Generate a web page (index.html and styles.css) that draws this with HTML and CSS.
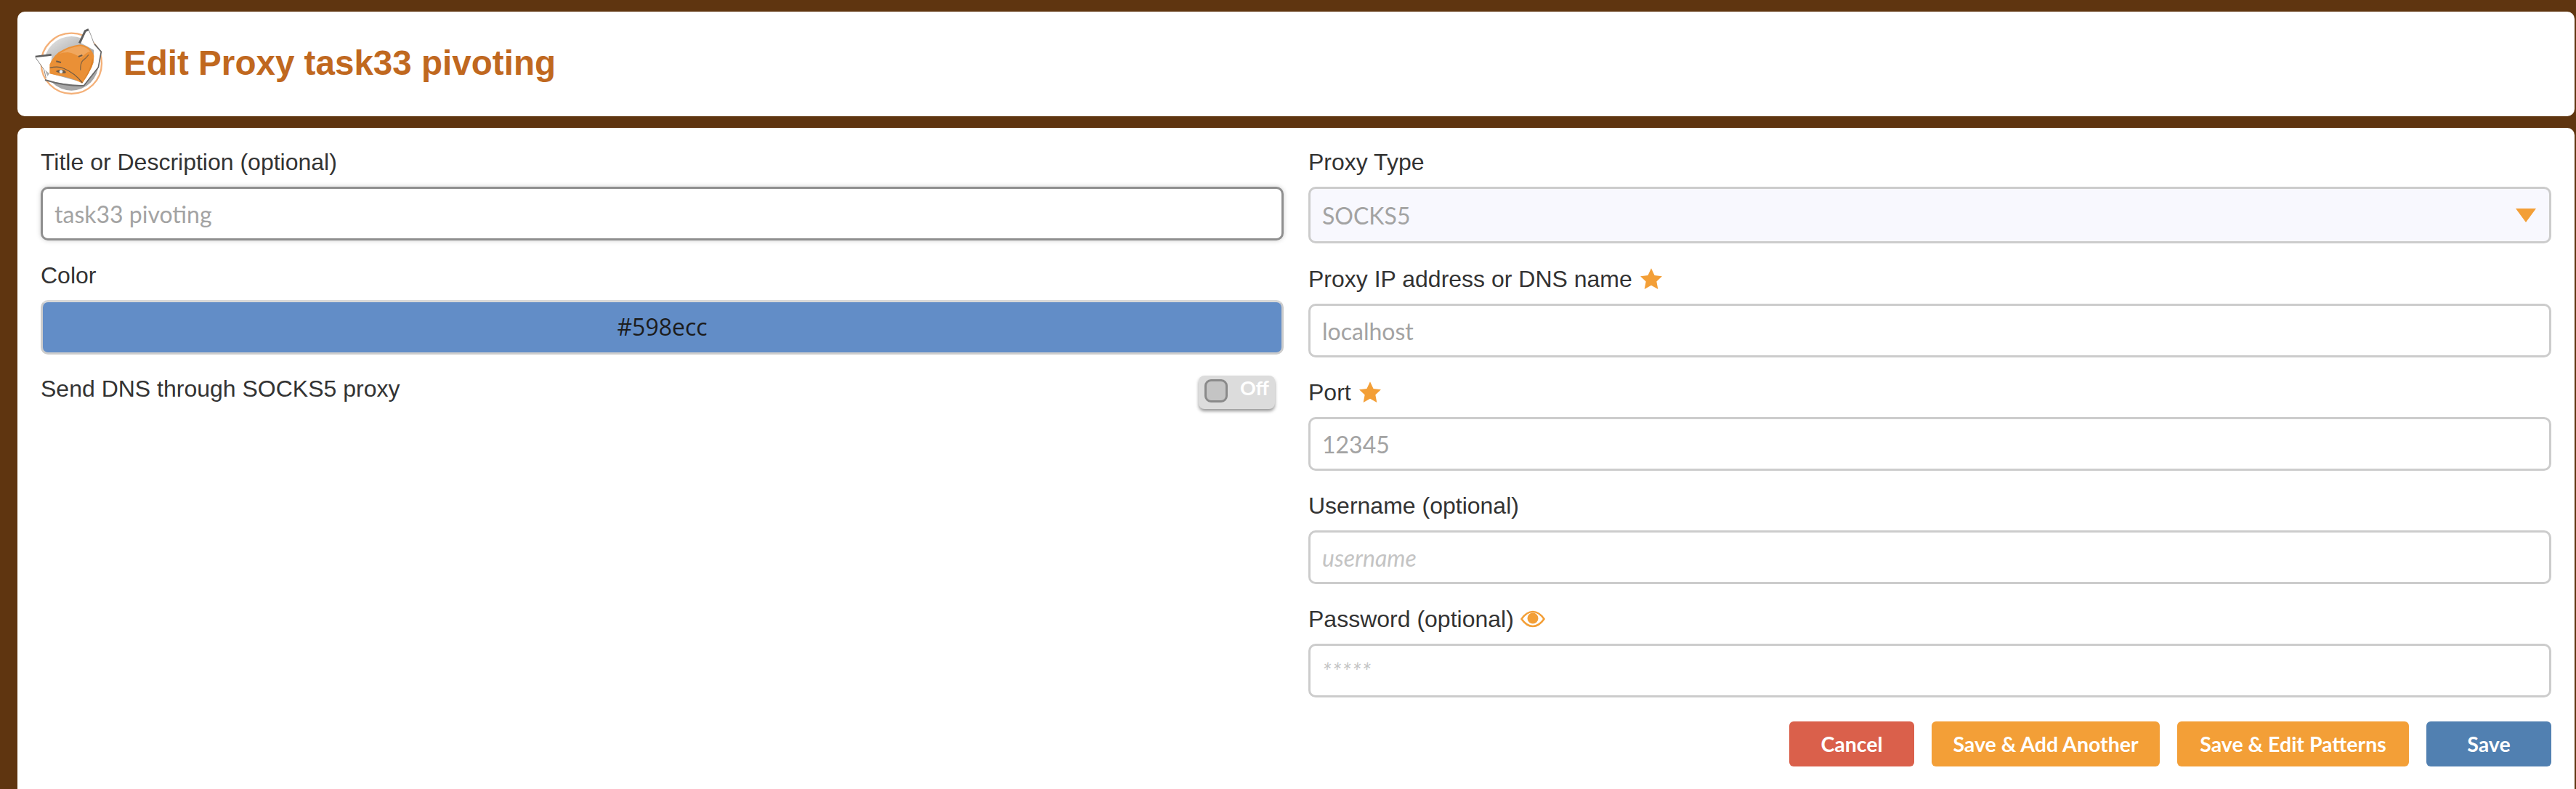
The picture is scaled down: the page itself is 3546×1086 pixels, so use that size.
FILE: index.html
```html
<!DOCTYPE html>
<html>
<head>
	<title>Edit Proxy</title>
	<link rel="stylesheet" href="styles.css">
</head>
<body>
	<!-- page title with the fox logo -->
	<div id="header" class="panel">
		<svg class="logo" viewBox="0 0 330 330">
			<defs>
				<linearGradient id="disc" x1="0.2" y1="0" x2="0.8" y2="1">
					<stop offset="0" stop-color="#e2e2e2"/>
					<stop offset="0.5" stop-color="#a6a6a6"/>
					<stop offset="1" stop-color="#a8a8a8"/>
				</linearGradient>
			</defs>
			<circle cx="175" cy="172" r="125" fill="#fff" stroke="#f4b078" stroke-width="7"/>
			<circle cx="175" cy="172" r="112" fill="url(#disc)"/>
			<!-- ears -->
			<path d="M215 88 L234 36 L246 32 Q258 60 268 90 L274 120 Z" fill="#fff"/>
			<path d="M208 88 Q222 60 232 38 L246 32" fill="none" stroke="#5f5f5f" stroke-width="9"/>
			<path d="M246 32 Q258 60 268 90" fill="none" stroke="#999" stroke-width="3"/>
			<path d="M28 146 L94 140 L86 215 L62 196 Z" fill="#fff"/>
			<path d="M26 144 L92 136" fill="none" stroke="#5f5f5f" stroke-width="8"/>
			<path d="M27 148 L62 198 L70 232" fill="none" stroke="#8a8a8a" stroke-width="3"/>
			<!-- white band under the chin -->
			<path d="M268 90 L296 122 L286 186 L226 262 Q150 262 68 240 L84 212 L218 250 L266 170 Z" fill="#fff"/>
			<path d="M270 92 L298 124 L286 188 L226 264" fill="none" stroke="#666" stroke-width="5"/>
			<path d="M226 264 Q150 266 66 240" fill="none" stroke="#6c6c6c" stroke-width="6"/>
			<!-- face -->
			<path d="M85 176 Q98 146 122 126 Q168 98 212 94 Q254 100 268 140 Q268 176 252 200 Q238 230 220 254 Q170 228 120 222 Q98 218 85 214 Z" fill="#ea9036"/>
			<path d="M125 132 Q170 104 212 100 Q240 106 252 122 Q232 128 214 150 Q190 130 160 126 Q140 126 125 132 Z" fill="#f0a75e"/>
			<path d="M225 240 Q252 200 262 150 Q268 170 252 200 Q240 226 225 240 Z" fill="#dd8228"/>
			<!-- eyes and muzzle lines -->
			<path d="M86 190 Q120 182 142 192 Q190 212 220 252" fill="none" stroke="#6f5a45" stroke-width="4"/>
			<path d="M110 204 Q126 194 146 200 Q156 208 150 212 Q126 216 110 204 Z" fill="#6f5a45"/>
			<circle cx="132" cy="206" r="7" fill="#e8edf0"/>
			<path d="M112 163 L132 168" stroke="#6f5a45" stroke-width="6" fill="none"/>
			<path d="M204 144 L220 138" stroke="#6f5a45" stroke-width="6" fill="none"/>
			<path d="M212 200 Q212 170 222 160 Q236 150 246 136" stroke="#8a6640" stroke-width="4" fill="none"/>
		</svg>
		<h1>Edit Proxy task33 pivoting</h1>
	</div>

	<div id="content" class="panel">
		<!-- left column -->
		<div class="column">
			<div class="field">
				<label>Title or Description (optional)</label>
				<input type="text" class="focused" placeholder="task33 pivoting">
			</div>
			<div class="field">
				<label>Color</label>
				<div class="color_bar">#598ecc</div>
			</div>
			<div class="dns_row">
				<label>Send DNS through SOCKS5 proxy</label>
				<div class="toggle">
					<span class="knob"></span>
					<span class="toggle_text">Off</span>
				</div>
			</div>
		</div>
		<!-- right column -->
		<div class="column">
			<div class="field type_field">
				<label>Proxy Type</label>
				<div class="select">
					<span>SOCKS5</span>
					<span class="arrow"></span>
				</div>
			</div>
			<div class="field">
				<label>Proxy IP address or DNS name
					<svg class="star" viewBox="0 0 24 24"><path d="M12 1 L15.4 8.2 L23.2 9.2 L17.5 14.6 L19 22.5 L12 18.6 L5 22.5 L6.5 14.6 L0.8 9.2 L8.6 8.2 Z"/></svg>
				</label>
				<input type="text" placeholder="localhost">
			</div>
			<div class="field">
				<label>Port
					<svg class="star" viewBox="0 0 24 24"><path d="M12 1 L15.4 8.2 L23.2 9.2 L17.5 14.6 L19 22.5 L12 18.6 L5 22.5 L6.5 14.6 L0.8 9.2 L8.6 8.2 Z"/></svg>
				</label>
				<input type="text" placeholder="12345">
			</div>
			<div class="field">
				<label>Username (optional)</label>
				<input type="text" class="faint" placeholder="username">
			</div>
			<div class="field">
				<label>Password (optional)
					<svg class="eye" viewBox="0 0 34 24">
						<path d="M1.5 12 C7 4 12 2 17 2 C22 2 27 4 32.5 12 C27 20 22 22 17 22 C12 22 7 20 1.5 12 Z" fill="none" stroke="#f39f37" stroke-width="2.6"/>
						<circle cx="17" cy="11" r="7.5" fill="#f39f37"/>
					</svg>
				</label>
				<input type="text" class="faint stars" placeholder="*****">
			</div>
			<div class="buttons">
				<button class="red">Cancel</button>
				<button class="orange add">Save &amp; Add Another</button>
				<button class="orange edit">Save &amp; Edit Patterns</button>
				<button class="blue">Save</button>
			</div>
		</div>
	</div>
</body>
</html>
```

FILE: styles.css
```css
body{
	margin: 0;
	height: 1086px;
	box-sizing: border-box;
	padding: 16px 2px 0 24px;
	background-color: #5f3510;
	font-family: "Liberation Sans", Arial, sans-serif;
	font-size: 32px;
	color: #333;
	overflow: hidden;
}
.panel{
	background-color: #fff;
	border-radius: 10px;
}
#header{
	display: flex;
	align-items: center;
	height: 144px;
	padding: 0 0 4px 16px;
	box-sizing: border-box;
	margin-bottom: 16px;
}
.logo{
	width: 110px;
	height: 110px;
	margin: 0 20px 2px 0;
}
h1{
	margin: 0;
	font-size: 47.6px;
	color: #c0681f;
}
#content{
	display: grid;
	grid-template-columns: 1711px 1711px;
	column-gap: 34px;
	height: 910px;
	box-sizing: border-box;
	padding: 26px 32px 0 32px;
	border-radius: 10px 10px 0 0;
}
.field label{
	display: flex;
	align-items: center;
	gap: 9px;
	height: 36px;
	padding-top: 3px;
	margin-bottom: 16px;
	line-height: 36px;
}
.field{
	margin-bottom: 27px;
}
.type_field{
	margin-bottom: 28px;
}
input{
	display: block;
	width: 100%;
	height: 74px;
	box-sizing: border-box;
	padding: 0 16px;
	border: 3px solid #ccc;
	border-radius: 10px;
	background-color: #fff;
	font-family: Lato, sans-serif;
	font-size: 32px;
	outline: none;
}
input::placeholder{
	color: #a3a3a3;
	opacity: 1;
}
input.focused{
	border-color: #8f8f8f;
	box-shadow: 0 0 6px #ccc;
}
input.faint::placeholder{
	color: #c4c4c4;
	font-style: italic;
}
input.stars::placeholder{
	letter-spacing: 1px;
}
.select{
	display: flex;
	align-items: center;
	justify-content: space-between;
	height: 78px;
	box-sizing: border-box;
	padding: 0 18px 0 16px;
	border: 3px solid #ccc;
	border-radius: 10px;
	background-color: #f8f8fe;
	font-family: Lato, sans-serif;
	font-size: 32px;
	color: #a3a3a3;
}
.arrow{
	width: 0;
	height: 0;
	border-left: 14px solid transparent;
	border-right: 14px solid transparent;
	border-top: 19px solid #f39f37;
}
.color_bar{
	height: 75px;
	box-sizing: border-box;
	border: 3px solid #ccc;
	border-top-color: #d8d8d8;
	border-radius: 10px;
	background-color: #628dc7;
	text-align: center;
	line-height: 67px;
	font-family: "Open Sans", sans-serif;
	font-size: 32px;
	color: #1c1c1c;
}
.dns_row{
	display: flex;
	justify-content: space-between;
	align-items: flex-start;
	padding-right: 12px;
}
.dns_row label{
	margin-top: 2px;
}
.toggle{
	display: flex;
	justify-content: space-between;
	width: 105px;
	height: 46px;
	box-sizing: border-box;
	padding: 5px 8px;
	margin-top: 2px;
	background-color: #dcdcdc;
	border-radius: 8px;
	box-shadow: 0 3px 4px #999;
}
.knob{
	width: 32px;
	height: 32px;
	box-sizing: border-box;
	border: 3px solid #8a8a8a;
	border-radius: 9px;
	background-color: #c4c4c4;
}
.toggle_text{
	font-family: Lato, sans-serif;
	font-weight: bold;
	font-size: 27px;
	line-height: 24px;
	color: #fff;
}
.star{
	width: 34px;
	height: 32px;
	fill: #f39f37;
}
.eye{
	width: 34px;
	height: 24px;
}
.buttons{
	display: flex;
	justify-content: flex-end;
	gap: 24px;
	margin-top: 33px;
}
button{
	height: 62px;
	padding: 0;
	border: 0;
	border-radius: 6px;
	font-family: Lato, sans-serif;
	font-weight: bold;
	font-size: 28.5px;
	color: #fff;
}
.red{
	width: 172px;
	background-color: #da604b;
}
.orange{
	background-color: #f39f37;
}
.add{
	width: 314px;
}
.edit{
	width: 319px;
}
.blue{
	width: 172px;
	background-color: #5180b1;
}
```
